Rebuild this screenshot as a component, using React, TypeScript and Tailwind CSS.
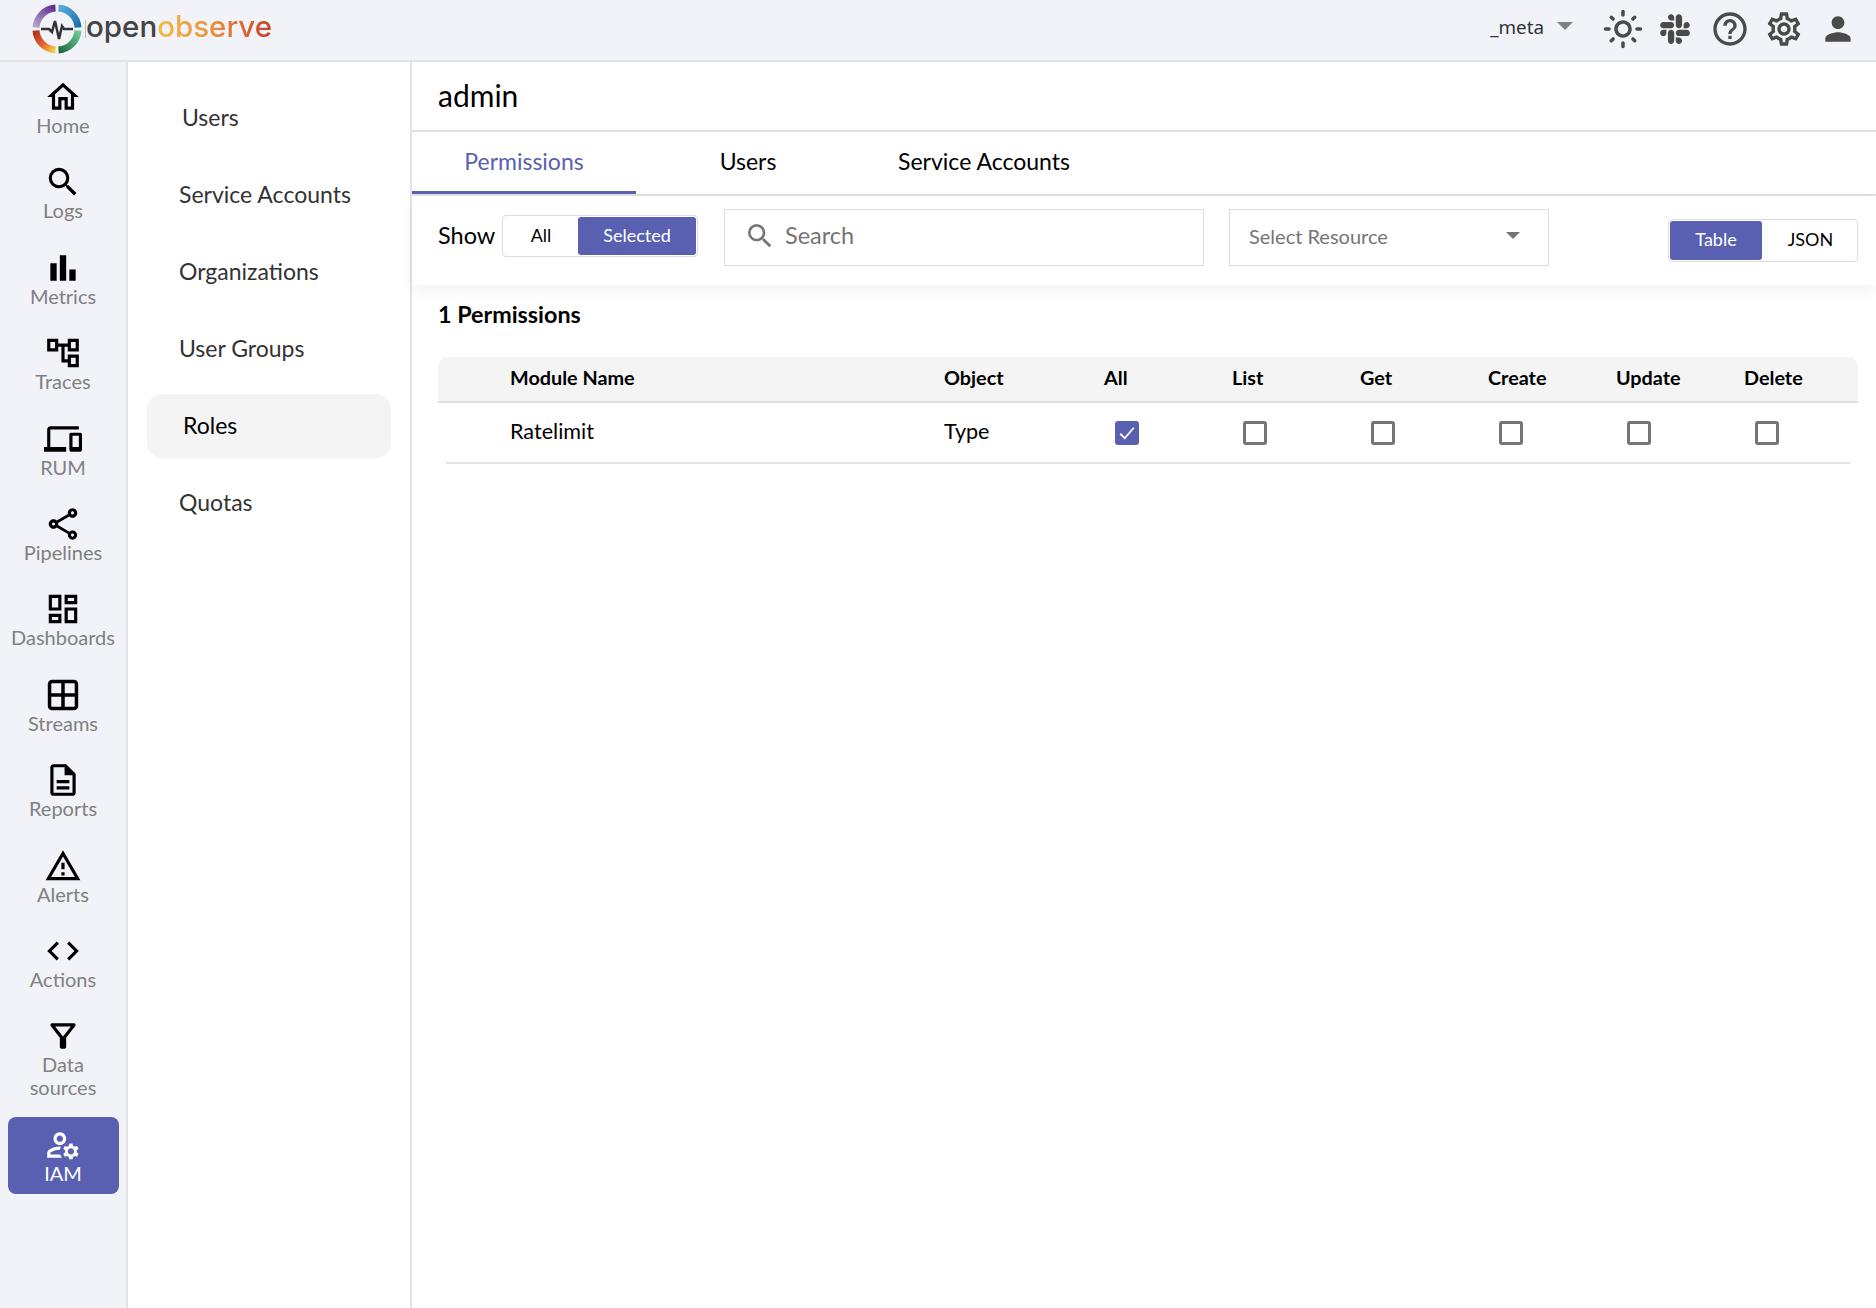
import { FaSlack } from "react-icons/fa";
import {
  MdBarChart,
  MdCode,
  MdHelpOutline,
  MdOutlineAccountTree,
  MdOutlineDashboard,
  MdOutlineDescription,
  MdOutlineDevices,
  MdOutlineFilterAlt,
  MdOutlineHome,
  MdOutlineLightMode,
  MdOutlineManageAccounts,
  MdOutlineSettings,
  MdOutlineShare,
  MdOutlineWarningAmber,
  MdPerson,
  MdSearch,
} from "react-icons/md";

function StreamsIcon({ size }: { size: number }) {
  return (
    <svg width={size} height={size} viewBox="0 0 24 24" fill="none" stroke="black" strokeWidth="2.2" className="text-black">
      <rect x="3.5" y="3.5" width="17" height="17" rx="1.6" />
      <path d="M12 3.5v17M3.5 12h17" />
    </svg>
  );
}

const navItems = [
  { label: "Home", icon: MdOutlineHome, size: 38 },
  { label: "Logs", icon: MdSearch, size: 38 },
  { label: "Metrics", icon: MdBarChart, size: 38 },
  { label: "Traces", icon: MdOutlineAccountTree, size: 38 },
  { label: "RUM", icon: MdOutlineDevices, size: 38 },
  { label: "Pipelines", icon: MdOutlineShare, size: 38 },
  { label: "Dashboards", icon: MdOutlineDashboard, size: 38 },
  { label: "Streams", icon: StreamsIcon, size: 38 },
  { label: "Reports", icon: MdOutlineDescription, size: 38 },
  { label: "Alerts", icon: MdOutlineWarningAmber, size: 38 },
  { label: "Actions", icon: MdCode, size: 38 },
];

const subItems = [
  { label: "Users", pad: "pl-[35px]" },
  { label: "Service Accounts", pad: "pl-[32px]" },
  { label: "Organizations", pad: "pl-[32px]" },
  { label: "User Groups", pad: "pl-[32px]" },
  { label: "Roles", pad: "pl-[36px] bg-[#f4f4f4] text-black" },
  { label: "Quotas", pad: "pl-[32px]" },
];

const headColumns = "grid grid-cols-[72px_434px_160px_128px_128px_128px_128px_128px_1fr] items-center";
const rowColumns = "grid grid-cols-[64px_434px_160px_128px_128px_128px_128px_128px_1fr] items-center";

function Logo() {
  return (
    <div className="ml-[32px] flex items-center">
      <svg width="50" height="50" viewBox="0 0 50 50" fill="none" strokeWidth="7">
        <defs>
          <linearGradient id="arcPurple" gradientUnits="userSpaceOnUse" x1="4" y1="25" x2="23" y2="4">
            <stop offset="0" stopColor="#b9aad0" />
            <stop offset="1" stopColor="#5f2f92" />
          </linearGradient>
          <linearGradient id="arcBlue" gradientUnits="userSpaceOnUse" x1="27" y1="4" x2="46" y2="23">
            <stop offset="0" stopColor="#58aedb" />
            <stop offset="1" stopColor="#1f6fa8" />
          </linearGradient>
          <linearGradient id="arcGreen" gradientUnits="userSpaceOnUse" x1="46" y1="27" x2="27" y2="46">
            <stop offset="0" stopColor="#6fcb92" />
            <stop offset="1" stopColor="#1f6a40" />
          </linearGradient>
          <linearGradient id="arcWarm" gradientUnits="userSpaceOnUse" x1="23" y1="46" x2="4" y2="27">
            <stop offset="0" stopColor="#f3cf4a" />
            <stop offset="0.45" stopColor="#e4662f" />
            <stop offset="1" stopColor="#b5301f" />
          </linearGradient>
        </defs>
        <path d="M4 23.5 A21 21 0 0 1 23.5 4" stroke="url(#arcPurple)" />
        <path d="M26.5 4 A21 21 0 0 1 46 23.5" stroke="url(#arcBlue)" />
        <path d="M46 26.5 A21 21 0 0 1 26.5 46" stroke="url(#arcGreen)" />
        <path d="M23.5 46 A21 21 0 0 1 4 26.5" stroke="url(#arcWarm)" />
        <path d="M9 25 H17 L20 28 L23 17 L27 35 L30 22 L32 25 H41" stroke="#333333" strokeWidth="2.5" />
      </svg>
      <span className="ml-[3px] h-[18px] w-px bg-[#bbbbbb]" />
      <span className="mb-[3px] font-['Inter',sans-serif] text-[29.5px] font-medium leading-none text-[#444444]">
        open
        <span className="bg-gradient-to-r from-[#f2bb43] via-[#ea8c3a] to-[#c4412b] bg-clip-text text-transparent">
          observe
        </span>
      </span>
    </div>
  );
}

function TopBar() {
  return (
    <header className="flex h-[62px] shrink-0 items-center justify-between border-b-2 border-[#e3e3e6] bg-[#f1f3f8] pb-[3px]">
      <Logo />
      <div className="flex items-center text-[#4a4a4a]">
        <span className="mb-[2px] font-['Noto_Sans',sans-serif] text-[18.8px] text-[#333333]">_meta</span>
        <span className="mb-[6px] ml-[13px] mr-[29px] h-0 w-0 border-x-[8px] border-t-[8px] border-x-transparent border-t-[#808080]" />
        <MdOutlineLightMode size={42} />
        <FaSlack size={34} className="ml-[14px]" />
        <MdHelpOutline size={40} className="ml-[18px]" />
        <MdOutlineSettings size={40} className="ml-[14px]" />
        <MdPerson size={38} className="ml-[15px] mr-[19px]" />
      </div>
    </header>
  );
}

function Sidebar() {
  return (
    <nav className="flex w-[128px] shrink-0 flex-col items-center gap-[8.4px] border-r-2 border-[#e3e3e6] bg-[#f1f3f8] pt-[7px] text-[20px] text-[#808080]">
      {navItems.map((item) => (
        <a key={item.label} className="flex h-[77px] w-[111px] flex-col items-center pt-[9px]">
          <item.icon size={item.size} className="text-black" />
          <span className="-mt-[2px] leading-[23px]">{item.label}</span>
        </a>
      ))}
      <a className="flex h-[100px] w-[111px] flex-col items-center pt-[9px]">
        <MdOutlineFilterAlt size={38} className="text-black" />
        <span className="-mt-[2px] text-center leading-[23px]">
          Data
          <br />
          sources
        </span>
      </a>
      <a className="flex h-[77px] w-[111px] flex-col items-center rounded-[8px] bg-[#5960b1] pt-[9px] text-white">
        <MdOutlineManageAccounts size={38} />
        <span className="-mt-[2px] leading-[23px]">IAM</span>
      </a>
    </nav>
  );
}

function SubNav() {
  return (
    <aside className="flex w-[284px] shrink-0 flex-col items-center gap-[13px] border-r-2 border-[#e3e3e6] pt-[24px] text-[23px] text-[#333333]">
      {subItems.map((item) => (
        <a key={item.label} className={`flex h-[64px] w-[244px] items-center rounded-[15px] pb-[2px] ${item.pad}`}>
          {item.label}
        </a>
      ))}
    </aside>
  );
}

function Toggle({ options, active, className }: { options: { label: string; width: string }[]; active: string; className: string }) {
  return (
    <div className={`flex items-stretch rounded-[4px] border border-[#dcdcdc] p-[1px] text-[18px] ${className}`}>
      {options.map((o) => (
        <span
          key={o.label}
          className={`flex items-center justify-center rounded-[3px] pb-[2px] ${o.width} ${o.label === active ? "bg-[#5960b1] text-white" : "text-black"}`}
        >
          {o.label}
        </span>
      ))}
    </div>
  );
}

function Checkbox({ checked }: { checked?: boolean }) {
  if (checked) {
    return (
      <span className="ml-[11px] flex h-[24px] w-[24px] items-center justify-center rounded-[3px] bg-[#5960b1]">
        <svg width="18" height="18" viewBox="0 0 24 24" fill="none" stroke="white" strokeWidth="2.4">
          <path d="M3 13l6 6L21 5" />
        </svg>
      </span>
    );
  }
  return <span className="ml-[11px] h-[24px] w-[24px] rounded-[3px] border-[3px] border-[#757575]" />;
}

function Toolbar() {
  return (
    <div className="flex h-[89px] shrink-0 items-start shadow-[0_5px_14px_rgba(0,0,0,0.06)]">
      <span className="ml-[26px] mt-[22px] w-[64px] text-[23.5px] leading-[34px] text-black">Show</span>
      <Toggle
        className="mt-[19px] h-[42px]"
        active="Selected"
        options={[
          { label: "All", width: "w-[74px]" },
          { label: "Selected", width: "w-[118px]" },
        ]}
      />
      <div className="ml-[26px] mt-[13px] flex h-[57px] w-[480px] items-center border border-[#dcdcdc] pb-[3px] pl-[20px] text-[#757575]">
        <MdSearch size={32} className="-ml-[1px]" />
        <span className="ml-[9px] text-[23.5px]">Search</span>
      </div>
      <div className="ml-[25px] mt-[13px] flex h-[57px] w-[320px] items-center justify-between border border-[#dcdcdc] pl-[19px] pr-[28px] text-[20px] text-[#757575]">
        <span className="pb-[3px]">Select Resource</span>
        <span className="mb-[4px] h-0 w-0 border-x-[7px] border-t-[7px] border-x-transparent border-t-[#757575]" />
      </div>
      <Toggle
        className="ml-[119px] mt-[23px] h-[43px]"
        active="Table"
        options={[
          { label: "Table", width: "w-[92px]" },
          { label: "JSON", width: "w-[94px] pl-[3px]" },
        ]}
      />
    </div>
  );
}

function PermissionsTable() {
  return (
    <div className="pl-[26px] pr-[18px] text-black">
      <h2 className="mt-[12px] text-[23.3px] font-bold leading-[34px]">1 Permissions</h2>
      <div className={`${headColumns} mt-[26px] h-[46px] rounded-t-[10px] border-b-2 border-[#dedede] bg-[#f4f4f4] pb-[2px] text-[19.8px] font-bold`}>
        {["", "Module Name", "Object", "All", "List", "Get", "Create", "Update", "Delete"].map((h) => (
          <span key={h}>{h}</span>
        ))}
      </div>
      <div className={`${rowColumns} ml-[8px] mr-[7px] h-[61px] border-b-2 border-[#e6e6e6] text-[21.6px]`}>
        <span />
        <span className="pb-[2px]">Ratelimit</span>
        <span className="pb-[2px]">Type</span>
        <span className="flex"><Checkbox checked /></span>
        <span className="flex"><Checkbox /></span>
        <span className="flex"><Checkbox /></span>
        <span className="flex"><Checkbox /></span>
        <span className="flex"><Checkbox /></span>
        <span className="flex"><Checkbox /></span>
      </div>
    </div>
  );
}

export default function App() {
  return (
    <div className="flex h-[1308px] flex-col overflow-hidden bg-white font-['Lato',sans-serif]">
      <TopBar />
      <div className="flex min-h-0 flex-1">
        <Sidebar />
        <SubNav />
        <main className="min-w-0 flex-1">
          <div className="flex h-[70px] items-center border-b-2 border-[#e0e0e0] pb-[2px] pl-[26px] text-[30px] text-black">admin</div>
          <div className="flex h-[64px] border-b-2 border-[#e0e0e0] text-[23px] text-black">
            <a className="flex h-[62px] w-[224px] items-center justify-center border-b-[3px] border-[#5960b1] pb-[1px] text-[#5960b1]">Permissions</a>
            <a className="flex w-[224px] items-center justify-center pb-[4px]">Users</a>
            <a className="flex w-[248px] items-center justify-center pb-[4px]">Service Accounts</a>
          </div>
          <Toolbar />
          <PermissionsTable />
        </main>
      </div>
    </div>
  );
}
